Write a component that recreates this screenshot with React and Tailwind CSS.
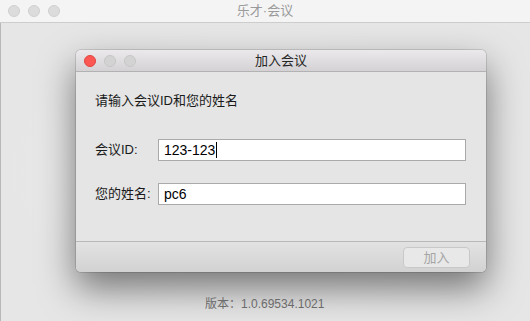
import React from 'react';

const FONT = { fontFamily: '"Liberation Sans", "Noto Sans CJK SC", sans-serif' };

function Light({ color }) {
  return <span className={`block h-[12px] w-[12px] rounded-full border ${color}`} />;
}

export default function App() {
  return (
    <div style={FONT} className="relative flex h-[321px] w-[530px] flex-col overflow-hidden bg-[#e6e6e6]">
      {/* outer window title bar */}
      <div className="relative flex h-[23px] shrink-0 items-center border-b border-[#cdcdcd] bg-[#f4f4f4] pl-[8px]">
        <div className="flex gap-[8px]">
          <Light color="border-[#d0d0d0] bg-[#dcdcdc]" />
          <Light color="border-[#d0d0d0] bg-[#dcdcdc]" />
          <Light color="border-[#d0d0d0] bg-[#dcdcdc]" />
        </div>
        <span className="absolute left-0 right-0 text-center text-[13px] text-[#9a9a9a]">乐才·会议</span>
      </div>
      <div className="absolute left-0 top-[23px] bottom-0 w-px bg-[#b8b8b8]" />

      {/* body */}
      <div className="flex flex-1 flex-col bg-[radial-gradient(ellipse_at_center,#eeeeee_0%,#e6e6e6_70%)] pl-[76px] pt-[27px]">
        <div className="flex h-[222px] w-[410px] flex-col overflow-hidden rounded-[5px] bg-[#e5e5e5] shadow-[0_16px_36px_rgba(0,0,0,0.5),0_0_0_1px_rgba(0,0,0,0.12)]">
          {/* dialog title bar */}
          <div className="relative flex h-[22px] shrink-0 items-center border-b border-[#b2b2b2] bg-gradient-to-b from-[#ebe9eb] to-[#d4d2d4] pl-[8px]">
            <div className="flex gap-[8px]">
              <Light color="border-[#e0443e] bg-[#fc5753]" />
              <Light color="border-[#c6c6c6] bg-[#d3d3d3]" />
              <Light color="border-[#c6c6c6] bg-[#d3d3d3]" />
            </div>
            <span className="absolute left-0 right-0 text-center text-[13px] text-[#262626]">加入会议</span>
          </div>

          {/* dialog content */}
          <div className="flex flex-1 flex-col pl-[19px] pr-[20px] pt-[21px] text-[13px] text-[#1a1a1a]">
            <p className="leading-[16px]">请输入会议ID和您的姓名</p>
            <div className="mt-[30px] flex items-center">
              <span className="w-[63px]">会议ID:</span>
              <div className="flex h-[22px] flex-1 items-center border border-[#aaaaaa] bg-white pl-[5px] text-[14px] text-black">
                123-123<span className="ml-px inline-block h-[16px] w-px bg-black" />
              </div>
            </div>
            <div className="mt-[22px] flex items-center">
              <span className="w-[63px]">您的姓名:</span>
              <div className="flex h-[22px] flex-1 items-center border border-[#aaaaaa] bg-white pl-[5px] text-[14px] text-black">
                pc6
              </div>
            </div>
          </div>

          {/* footer */}
          <div className="flex h-[31px] shrink-0 items-center justify-end border-t border-[#b8b8b8] bg-gradient-to-b from-[#e2e2e2] to-[#d2d2d2] pr-[16px]">
            <button className="h-[21px] w-[67px] rounded-[4px] border border-[#c8c8c8] bg-[#e8e8e8] text-[13px] text-[#a5a5a5]">
              加入
            </button>
          </div>
        </div>
      </div>

      <div className="absolute bottom-[8px] left-[205px] text-[12px] text-[#6b6b6b]">版本：1.0.69534.1021</div>
    </div>
  );
}
